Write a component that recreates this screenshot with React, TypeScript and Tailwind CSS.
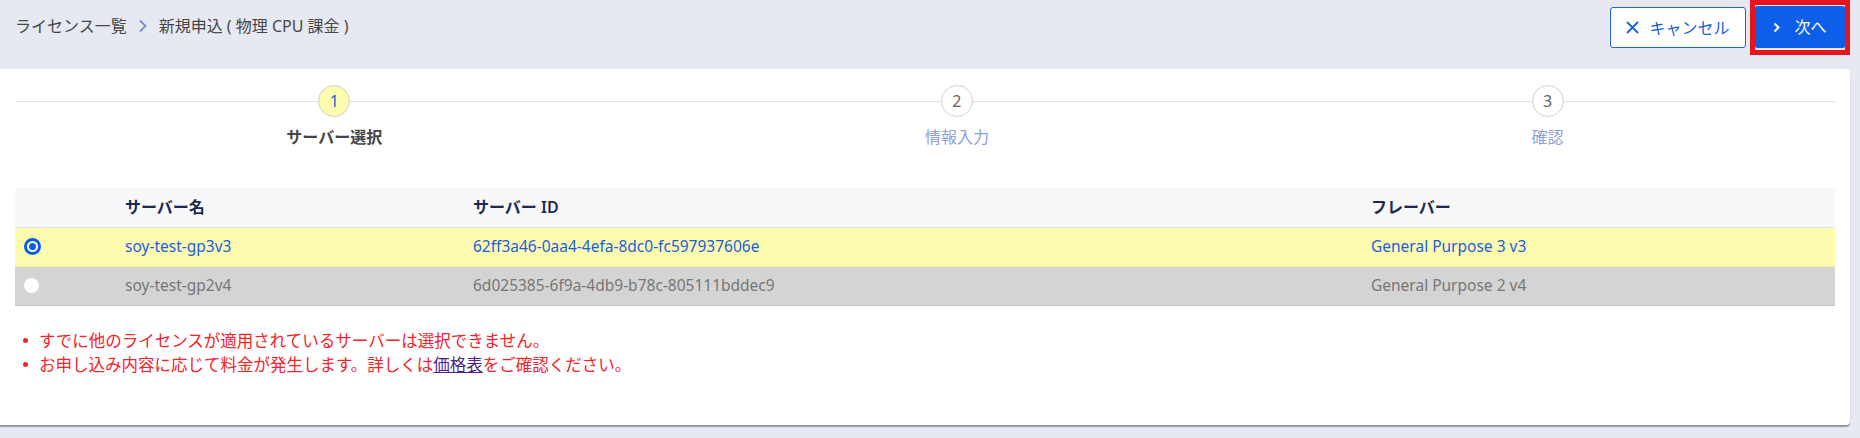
import React from 'react';

const FONT = "font-['Noto_Sans','Noto_Sans_CJK_JP',sans-serif]";

const steps = [
  { no: 1, label: 'サーバー選択', active: true },
  { no: 2, label: '情報入力', active: false },
  { no: 3, label: '確認', active: false },
];

const servers = [
  {
    name: 'soy-test-gp3v3',
    id: '62ff3a46-0aa4-4efa-8dc0-fc597937606e',
    flavor: 'General Purpose 3 v3',
    selected: true,
  },
  {
    name: 'soy-test-gp2v4',
    id: '6d025385-6f9a-4db9-b78c-805111bddec9',
    flavor: 'General Purpose 2 v4',
    selected: false,
  },
];

const Radio = ({ checked }: { checked: boolean }) =>
  checked ? (
    <span className="flex h-[17px] w-[17px] items-center justify-center rounded-full bg-[#0b5ce6]">
      <span className="flex h-[11px] w-[11px] items-center justify-center rounded-full bg-white">
        <span className="h-[7px] w-[7px] rounded-full bg-[#0b5ce6]" />
      </span>
    </span>
  ) : (
    <span className="block h-[15px] w-[15px] rounded-full bg-white" />
  );

export default function App() {
  return (
    <div className={`${FONT} min-h-[438px] bg-[#e6e9f2] pr-[10px]`}>
      {/* top bar: breadcrumb + actions */}
      <div className="flex h-[69px] items-start justify-between">
        <div className="mt-[15px] flex items-center pl-[15px] text-[16px] leading-[22px] text-[#474747]">
          <span>ライセンス一覧</span>
          <svg
            className="mx-[11px]"
            width="10"
            height="14"
            viewBox="0 0 10 14"
            fill="none"
            stroke="#7b8fc2"
            strokeWidth="1.8"
          >
            <path d="M2 1.5 L7.5 7 L2 12.5" />
          </svg>
          <span>新規申込 ( 物理 CPU 課金 )</span>
        </div>
        <div className="flex items-start">
          <button className="mt-[7px] flex h-[41px] w-[136px] items-center justify-center gap-[10px] rounded-[3px] border border-[#1a66e6] bg-white text-[16px] text-[#1a5fe0]">
            <svg width="13" height="13" viewBox="0 0 13 13" stroke="#1a5fe0" strokeWidth="1.8">
              <path d="M1 1 L12 12 M12 1 L1 12" />
            </svg>
            キャンセル
          </button>
          <div className="ml-[4px] border-[5px] border-[#e8141c] pt-[1px] pb-[2px]">
            <button className="flex h-[42px] w-[90px] items-center justify-center gap-[14px] rounded-[2px] bg-[#0d5ee8] text-[16px] text-white">
              <svg width="7" height="11" viewBox="0 0 7 11" fill="none" stroke="white" strokeWidth="2">
                <path d="M1.5 1.5 L5.5 5.5 L1.5 9.5" />
              </svg>
              次へ
            </button>
          </div>
        </div>
      </div>

      {/* main card */}
      <div className="rounded-r-[4px] bg-white px-[15px] pt-[16px] pb-[48px] shadow-[0_2px_1px_rgba(0,0,0,0.35)]">
        {/* stepper */}
        <div className="relative">
          <div className="absolute top-[16px] right-0 left-0 h-px bg-[#e2e2e2]" />
          <div className="relative flex justify-around">
            {steps.map((s) => (
              <div key={s.no} className="flex flex-col items-center">
                <div
                  className={`flex h-[32px] w-[32px] items-center justify-center rounded-full border border-[#d2d2d2] text-[16px] ${
                    s.active ? 'bg-[#fdfbad] text-[#1a5fe0]' : 'bg-white text-[#666]'
                  }`}
                >
                  {s.no}
                </div>
                <div
                  className={`mt-[9px] text-[16px] leading-[22px] ${
                    s.active ? 'font-bold text-[#454545]' : 'text-[#8ca2d3]'
                  }`}
                >
                  {s.label}
                </div>
              </div>
            ))}
          </div>
        </div>

        {/* server table */}
        <table className="mt-[40px] w-full border-collapse text-left">
          <thead>
            <tr className="h-[39px] border-b border-[#e3e6eb] bg-[#f7f8fa] text-[16px] font-bold text-[#1b2a4e]">
              <th className="w-[98px]" />
              <th className="w-[348px] px-[12px]">サーバー名</th>
              <th className="w-[898px] px-[12px]">
                サーバー <span className="font-semibold">ID</span>
              </th>
              <th className="px-[12px]">フレーバー</th>
            </tr>
          </thead>
          <tbody className="text-[15.5px]">
            {servers.map((s) => (
              <tr
                key={s.id}
                className={`h-[39px] border-b ${
                  s.selected
                    ? 'border-[#f3f0a0] bg-[#fdfbad] text-[#1a5fe0]'
                    : 'border-[#c4c4c4] bg-[#d4d4d4] text-[#777]'
                }`}
              >
                <td className="pl-[9px]">
                  <Radio checked={s.selected} />
                </td>
                <td className="px-[12px]">{s.name}</td>
                <td className="px-[12px]">{s.id}</td>
                <td className="px-[12px]">{s.flavor}</td>
              </tr>
            ))}
          </tbody>
        </table>

        {/* notes */}
        <ul className="mt-[23px] text-[16.5px] leading-[24px] text-[#f2232b]">
          <li className="flex items-center">
            <span className="mr-[11px] ml-[8px] h-[5px] w-[5px] rounded-full bg-[#f2232b]" />
            すでに他のライセンスが適用されているサーバーは選択できません。
          </li>
          <li className="flex items-center">
            <span className="mr-[11px] ml-[8px] h-[5px] w-[5px] rounded-full bg-[#f2232b]" />
            お申し込み内容に応じて料金が発生します。詳しくは
            <a href="#" className="text-[#4b1f8c] underline">
              価格表
            </a>
            をご確認ください。
          </li>
        </ul>
      </div>
    </div>
  );
}
